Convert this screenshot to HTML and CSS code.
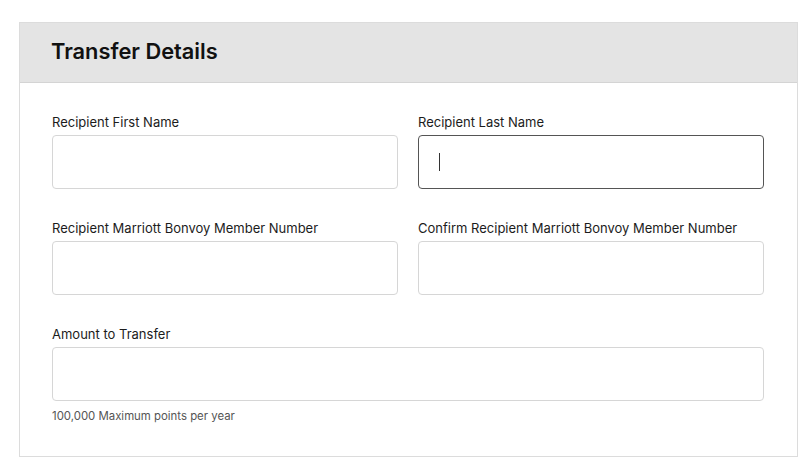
FILE: index.html
```html
<!DOCTYPE html>
<html lang="en">
<head>
<meta charset="utf-8">
<title>Transfer Details</title>
<link rel="stylesheet" href="styles.css">
</head>
<body>
<section class="card">
  <header class="card-header">
    <h2 class="title">Transfer Details</h2>
  </header>
  <div class="card-body">
    <div class="grid">
      <div class="field">
        <label class="label">Recipient First Name</label>
        <div class="input"></div>
      </div>
      <div class="field">
        <label class="label">Recipient Last Name</label>
        <div class="input focused"><span class="caret"></span></div>
      </div>
      <div class="field">
        <label class="label">Recipient Marriott Bonvoy Member Number</label>
        <div class="input"></div>
      </div>
      <div class="field">
        <label class="label">Confirm Recipient Marriott Bonvoy Member Number</label>
        <div class="input"></div>
      </div>
      <div class="field full">
        <label class="label">Amount to Transfer</label>
        <div class="input"></div>
        <p class="hint">100,000 Maximum points per year</p>
      </div>
    </div>
  </div>
</section>
</body>
</html>
```

FILE: styles.css
```css
* { box-sizing: border-box; }
html, body { margin: 0; padding: 0; background: #ffffff; }
body {
  font-family: "Inter", "Liberation Sans", sans-serif;
  color: #1c1c1c;
  padding: 22px 13px 0 19px;
}
.card {
  border: 1px solid #dcdcdc;
  height: 435px;
  background: #fff;
}
.card-header {
  background: #e4e4e4;
  border-bottom: 1px solid #d4d4d4;
  height: 60px;
  display: flex;
  align-items: center;
  padding: 0 0 3px 31px;
}
.title {
  margin: 0;
  font-size: 21.8px;
  font-weight: 600;
  color: #111;
}
.card-body {
  padding: 31px 33px 0 32px;
}
.grid {
  display: grid;
  grid-template-columns: 346px 346px;
  column-gap: 20px;
  row-gap: 31px;
}
.full { grid-column: 1 / -1; }
.field { display: flex; flex-direction: column; }
.label {
  font-size: 13px;
  line-height: 16px;
  color: #1c1c1c;
  margin-bottom: 5px;
}
.input {
  height: 54px;
  border: 1px solid #d6d6d6;
  border-radius: 4px;
  display: flex;
  align-items: center;
  padding-left: 20px;
}
.input.focused { border-color: #555555; }
.caret {
  width: 1px;
  height: 18px;
  background: #333;
}
.hint {
  margin: 8px 0 0;
  font-size: 11.4px;
  line-height: 14px;
  color: #555;
}
```
